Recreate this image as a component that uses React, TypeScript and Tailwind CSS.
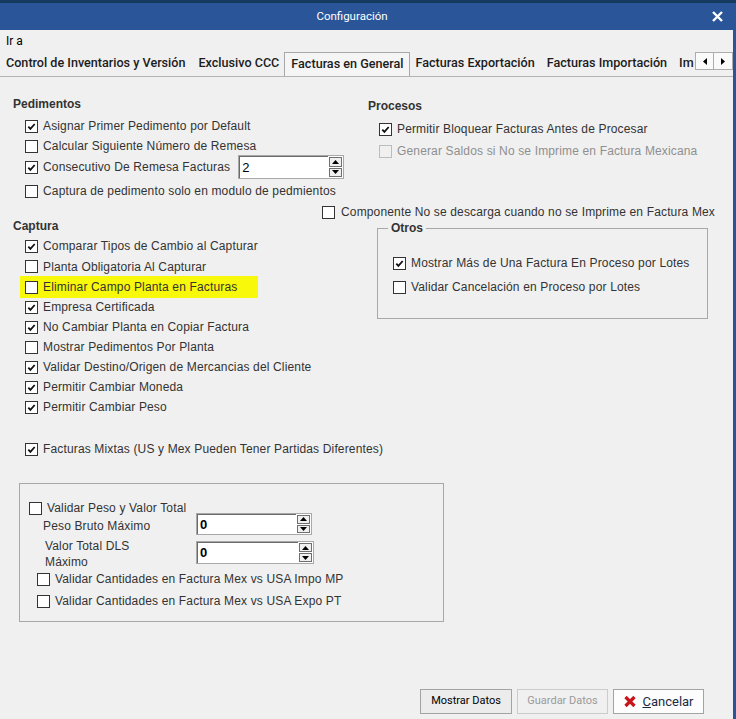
import React from "react";

const F = { fontFamily: '"Liberation Sans", Arial, sans-serif' };
const R = { fontFamily: 'Roboto, "Liberation Sans", sans-serif' };

function Box({ checked = false, disabled = false }: { checked?: boolean; disabled?: boolean }) {
  return (
    <span
      className={
        "inline-flex h-[13px] w-[13px] shrink-0 items-center justify-center border " +
        (disabled ? "border-[#bcbcbc] bg-[#f0f0f0]" : "border-[#333333] bg-white")
      }
    >
      {checked && (
        <svg width="11" height="11" viewBox="0 0 11 11">
          <path d="M2.3 5.6 L4.4 7.8 L8.7 3" fill="none" stroke="#111" strokeWidth="1.8" />
        </svg>
      )}
    </span>
  );
}

function Check({
  label,
  checked = false,
  disabled = false,
  gap = "gap-[5px]",
}: {
  label: string;
  checked?: boolean;
  disabled?: boolean;
  gap?: string;
}) {
  return (
    <div className={"flex shrink-0 items-center " + gap}>
      <Box checked={checked} disabled={disabled} />
      <span
        className={"whitespace-nowrap text-[12px] tracking-[0.15px] " + (disabled ? "text-[#8f8f8f]" : "text-[#333333]")}
        style={F}
      >
        {label}
      </span>
    </div>
  );
}

function SpinBtns() {
  return (
    <div className="flex h-full w-[15px] shrink-0 flex-col gap-[1px] p-[1px]">
      <div className="flex flex-1 items-center justify-center border border-[#6f6f6f] bg-[#f0f0f0]">
        <svg width="7" height="4" viewBox="0 0 7 4">
          <path d="M0 4 L3.5 0 L7 4 Z" fill="#000" />
        </svg>
      </div>
      <div className="flex flex-1 items-center justify-center border border-[#6f6f6f] bg-[#f0f0f0]">
        <svg width="7" height="4" viewBox="0 0 7 4">
          <path d="M0 0 L3.5 4 L7 0 Z" fill="#000" />
        </svg>
      </div>
    </div>
  );
}

function Spinner({ value, w, h, bold = false }: { value: string; w: string; h: string; bold?: boolean }) {
  return (
    <div className={"flex shrink-0 border border-[#a8a8a8] bg-white " + w + " " + h}>
      <div className="flex flex-1 items-center border-l border-t border-[#6a6a6a] pl-[2px]">
        <span className={"text-[13px] text-black " + (bold ? "font-bold" : "")} style={F}>
          {value}
        </span>
      </div>
      <SpinBtns />
    </div>
  );
}

function Heading({ children }: { children: React.ReactNode }) {
  return (
    <div className="text-[12px] font-bold leading-[18px] text-[#333333]" style={F}>
      {children}
    </div>
  );
}

function Tab({ label }: { label: string }) {
  return (
    <div className="whitespace-nowrap text-[12.6px] font-medium text-[#1c1c1c]" style={R}>
      {label}
    </div>
  );
}

export default function App() {
  return (
    <div className="flex h-[719px] w-[736px] flex-col overflow-hidden bg-[#f0f0f0]">
      {/* title bar */}
      <div className="h-[3px] bg-[#153a60]" />
      <div className="relative flex h-[27px] items-center justify-center bg-[#2a5599] pr-[32px]">
        <span className="text-[11.5px] text-white" style={R}>
          Configuración
        </span>
        <svg className="absolute right-[13px] top-[8px]" width="11" height="11" viewBox="0 0 11 11">
          <path d="M1 1 L10 10 M10 1 L1 10" stroke="#fff" strokeWidth="2.4" />
        </svg>
      </div>

      <div className="flex flex-1 flex-col border-r-[3px] border-[#2a5599]">
        {/* Ir a */}
        <div className="h-[20px] pl-[6px] pt-[4px] text-[12px] leading-[14px] text-black" style={R}>
          Ir a
        </div>

        {/* tabs */}
        <div className="relative h-[27px] overflow-hidden border-b border-[#b4b4b4]">
          <div className="flex h-[26px] items-center pt-[1px]">
            <div className="ml-[6px]">
              <Tab label="Control de Inventarios y Versión" />
            </div>
            <div className="ml-[13px]">
              <Tab label="Exclusivo CCC" />
            </div>
            <div className="ml-[5px] mt-[1px] flex h-[25px] items-center self-start border border-b-0 border-[#a8a8a8] bg-[#f5f5f5] px-[6px] pb-[1px]">
              <Tab label="Facturas en General" />
            </div>
            <div className="ml-[5px]">
              <Tab label="Facturas Exportación" />
            </div>
            <div className="ml-[12px]">
              <Tab label="Facturas Importación" />
            </div>
            <div className="ml-[12px]">
              <Tab label="Im" />
            </div>
          </div>
          <div className="absolute right-0 top-[2px] flex bg-[#f0f0f0]">
            <div className="flex h-[18px] w-[19px] items-center justify-center border border-[#adadad] bg-[#fafafa]">
              <svg width="4" height="7" viewBox="0 0 4 7">
                <path d="M4 0 L0 3.5 L4 7 Z" fill="#000" />
              </svg>
            </div>
            <div className="flex h-[18px] w-[19px] items-center justify-center border border-l-0 border-[#adadad] bg-[#fafafa]">
              <svg width="4" height="7" viewBox="0 0 4 7">
                <path d="M0 0 L4 3.5 L0 7 Z" fill="#000" />
              </svg>
            </div>
          </div>
        </div>

        {/* top section */}
        <div className="flex">
          <div className="w-[309px] shrink-0 pl-[13px]">
            <div className="mt-[18px]">
              <Heading>Pedimentos</Heading>
            </div>
            <div className="ml-[12px] mt-[3px] flex flex-col">
              <div className="flex h-[20px] items-center">
                <Check label="Asignar Primer Pedimento por Default" checked />
              </div>
              <div className="flex h-[20px] items-center">
                <Check label="Calcular Siguiente Número de Remesa" />
              </div>
              <div className="flex h-[22px] items-center gap-[8px]">
                <Check label="Consecutivo De Remesa Facturas" checked />
                <Spinner value="2" w="w-[106px]" h="h-[24px]" />
              </div>
              <div className="mt-[3px] flex h-[20px] items-center">
                <Check label="Captura de pedimento solo en modulo de pedmientos" />
              </div>
            </div>
          </div>
          <div className="pl-[59px]">
            <div className="mt-[20px]">
              <Heading>Procesos</Heading>
            </div>
            <div className="ml-[11px] mt-[4px] flex flex-col gap-[2px]">
              <div className="flex h-[20px] items-center">
                <Check label="Permitir Bloquear Facturas Antes de Procesar" checked />
              </div>
              <div className="flex h-[20px] items-center">
                <Check label="Generar Saldos si No se Imprime en Factura Mexicana" disabled />
              </div>
            </div>
          </div>
        </div>

        {/* second section */}
        <div className="flex">
          <div className="w-[309px] shrink-0 pl-[13px]">
            <div className="mt-[16px]">
              <Heading>Captura</Heading>
            </div>
            <div className="ml-[12px] mt-[1px] flex flex-col">
              <div className="flex h-[20px] items-center">
                <Check label="Comparar Tipos de Cambio al Capturar" checked />
              </div>
              <div className="flex h-[21px] items-center">
                <Check label="Planta Obligatoria Al Capturar" />
              </div>
              <div className="flex h-[20px] items-center">
                <div className="ml-[-5px] flex h-[22px] w-[238px] shrink-0 items-center bg-[#f8f80a] pl-[5px]">
                  <Check label="Eliminar Campo Planta en Facturas" />
                </div>
              </div>
              <div className="flex h-[20px] items-center">
                <Check label="Empresa Certificada" checked />
              </div>
              <div className="flex h-[20px] items-center">
                <Check label="No Cambiar Planta en Copiar Factura" checked />
              </div>
              <div className="flex h-[20px] items-center">
                <Check label="Mostrar Pedimentos Por Planta" />
              </div>
              <div className="flex h-[20px] items-center">
                <Check label="Validar Destino/Origen de Mercancias del Cliente" checked />
              </div>
              <div className="flex h-[20px] items-center">
                <Check label="Permitir Cambiar Moneda" checked />
              </div>
              <div className="flex h-[20px] items-center">
                <Check label="Permitir Cambiar Peso" checked />
              </div>
              <div className="mt-[22px] flex h-[20px] items-center">
                <Check label="Facturas Mixtas (US y Mex Pueden Tener Partidas Diferentes)" checked />
              </div>
            </div>
          </div>
          <div className="pl-[13px]">
            <div className="mt-[3px] flex h-[16px] items-center">
              <Check label="Componente No se descarga cuando no se Imprime en Factura Mex" gap="gap-[6px]" />
            </div>
            <div className="relative ml-[55px] mt-[8px] h-[91px] w-[331px] border border-[#a8a8a8]">
              <span
                className="absolute left-[10px] top-[-9px] bg-[#f0f0f0] px-[3px] text-[12px] font-bold leading-[16px] text-[#333333]"
                style={F}
              >
                Otros
              </span>
              <div className="ml-[15px] mt-[24px] flex flex-col gap-[4px]">
                <div className="flex h-[20px] items-center">
                  <Check label="Mostrar Más de Una Factura En Proceso por Lotes" checked />
                </div>
                <div className="flex h-[20px] items-center">
                  <Check label="Validar Cancelación en Proceso por Lotes" />
                </div>
              </div>
            </div>
          </div>
        </div>

        {/* validation box */}
        <div className="ml-[19px] mt-[24px] flex h-[139px] w-[425px] flex-col border border-[#a8a8a8]">
          <div className="ml-[9px] mt-[16px] flex h-[16px] items-center">
            <Check label="Validar Peso y Valor Total" />
          </div>
          <div className="mt-[-3px] flex h-[22px] items-center">
            <div className="w-[176px] pl-[23px] pt-[3px] text-[12px] text-[#333333] tracking-[0.15px]" style={F}>
              Peso Bruto Máximo
            </div>
            <Spinner value="0" w="w-[116px]" h="h-[22px]" bold />
          </div>
          <div className="mt-[3px] flex h-[32px] items-start">
            <div className="w-[176px] pl-[25px] text-[12px] leading-[16px] text-[#333333] tracking-[0.15px]" style={F}>
              Valor Total DLS
              <br />
              Máximo
            </div>
            <div className="mt-[3px]">
              <Spinner value="0" w="w-[118px]" h="h-[23px]" bold />
            </div>
          </div>
          <div className="ml-[17px] mt-[1px] flex h-[16px] items-center">
            <Check label="Validar Cantidades en Factura Mex vs USA Impo MP" />
          </div>
          <div className="ml-[17px] mt-[6px] flex h-[16px] items-center">
            <Check label="Validar Cantidades en Factura Mex vs USA Expo PT" />
          </div>
        </div>

        {/* buttons */}
        <div className="mt-auto flex justify-end gap-[5px] pb-[5px] pr-[29px]">
          <div
            className="flex h-[25px] w-[92px] items-center justify-center border border-[#a3a3a3] bg-[#ececec] text-[11px] text-black"
            style={R}
          >
            Mostrar Datos
          </div>
          <div
            className="flex h-[25px] w-[91px] items-center justify-center border border-[#cccccc] bg-[#f0f0f0] text-[11px] text-[#9a9a9a]"
            style={R}
          >
            Guardar Datos
          </div>
          <div
            className="flex h-[25px] w-[91px] items-center justify-center gap-[5px] border border-[#a3a3a3] bg-[#fdfdfd] text-[13px] text-[#1b2a44]"
            style={R}
          >
            <svg width="14" height="13" viewBox="0 0 14 13">
              <path d="M2.5 2 L11.5 11 M11.5 2 L2.5 11" stroke="#c8141b" strokeWidth="3.2" />
            </svg>
            <span>
              <span className="underline">C</span>ancelar
            </span>
          </div>
        </div>
      </div>
    </div>
  );
}
